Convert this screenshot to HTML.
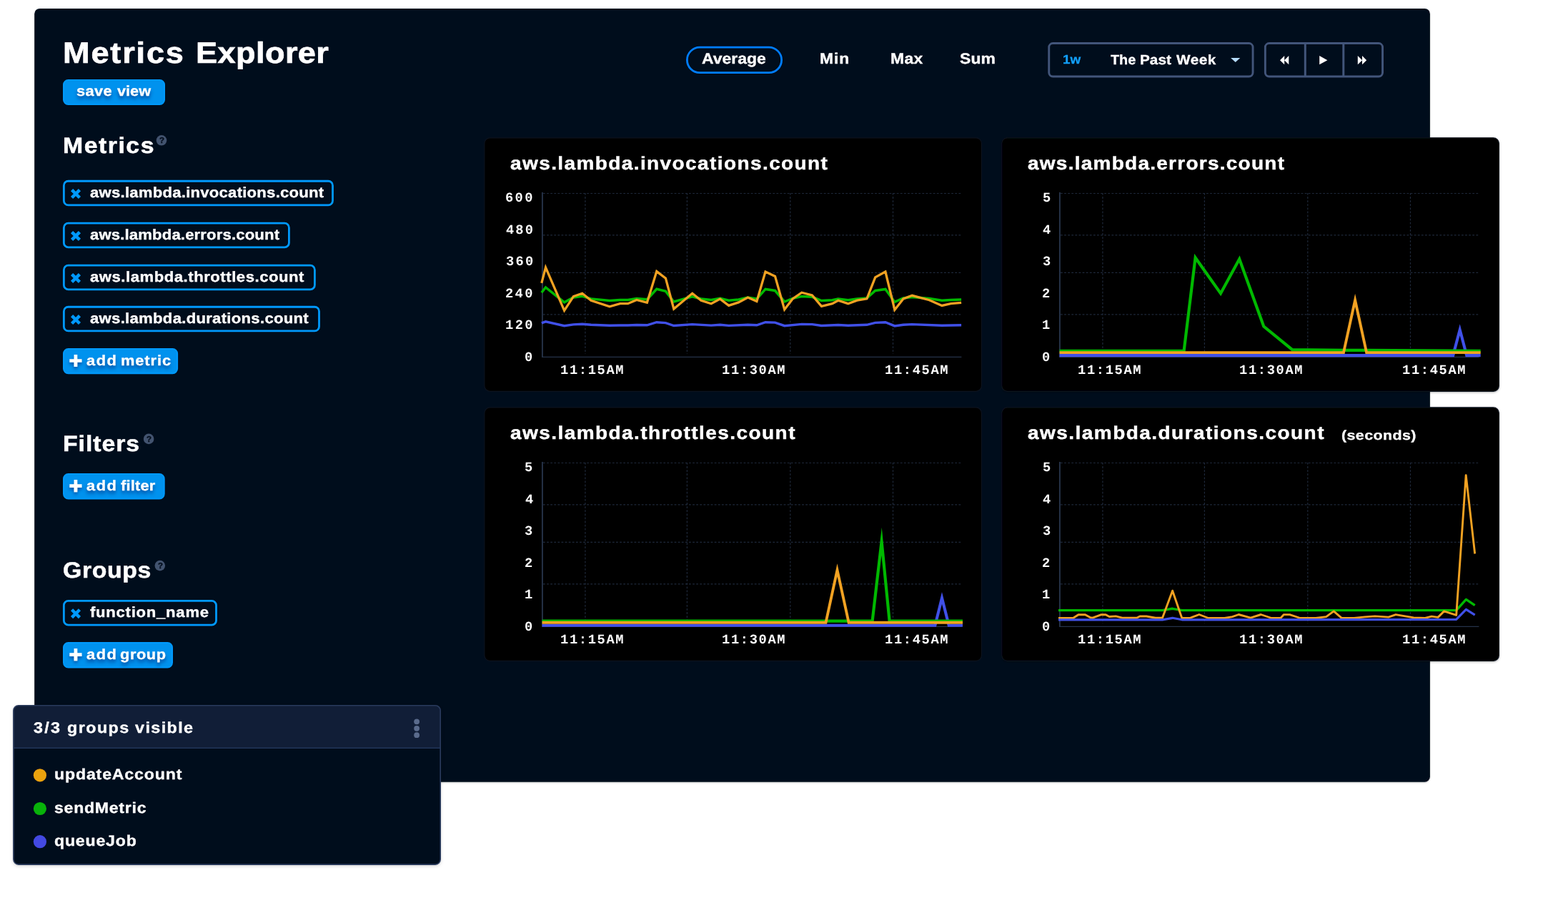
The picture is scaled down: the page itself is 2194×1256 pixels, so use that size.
<!DOCTYPE html>
<html lang="en"><head><meta charset="utf-8"><title>Metrics Explorer</title>
<meta name="viewport" content="width=2194">
<style>
*{box-sizing:border-box;margin:0;padding:0}
html,body{width:2194px;height:1256px;overflow:hidden;background:#fff}
body{position:relative;font-family:'Liberation Sans', Arial, sans-serif;font-weight:bold;color:#fff;text-rendering:geometricPrecision}
.abs,.t{position:absolute}
.t{white-space:nowrap;display:block;font-weight:bold;transform-origin:0 50%;will-change:transform}
.w{position:absolute;top:0;transform-origin:0 50%;display:block;will-change:transform}
.m{font-family:'Liberation Mono', monospace}
.sh{text-shadow:0 4px 5px rgba(0,50,130,.85)}
svg{display:block;overflow:visible}
</style></head>
<body>
<svg class="abs" width="2194" height="1256" viewBox="0 0 2194 1256" style="left:0;top:0"><defs><filter id="ps" x="-1%" y="-1%" width="102%" height="103%"><feDropShadow dx="0" dy="1" stdDeviation="1.2" flood-color="#000" flood-opacity=".22"/></filter><filter id="ls" x="-3%" y="-5%" width="106%" height="112%"><feDropShadow dx="0" dy="2" stdDeviation="2.5" flood-color="#000" flood-opacity=".2"/></filter><filter id="cs" x="-2%" y="-3%" width="104%" height="107%"><feDropShadow dx="0" dy="1" stdDeviation="1.5" flood-color="#000" flood-opacity=".3"/></filter><filter id="is" x="-50%" y="-50%" width="200%" height="200%"><feDropShadow dx="0" dy="3" stdDeviation="2.2" flood-color="#003a8c" flood-opacity=".75"/></filter></defs><rect x="48.20" y="11.90" width="1952.70" height="1081.90" rx="7.50" fill="#020c1b" filter="url(#ps)"/>
<rect x="89.00" y="112.10" width="141.00" height="33.90" rx="6.50" fill="#0092ee" stroke="#0099fc" stroke-width="2"/>
<rect x="961.40" y="66.20" width="132.20" height="35.40" rx="17.70" fill="none" stroke="#007dff" stroke-width="2.8"/>
<rect x="1467.75" y="60.55" width="285.30" height="46.50" rx="5.55" fill="none" stroke="#42557a" stroke-width="2.9"/>
<path d="M1722.1 81.1H1735.3L1728.7 86.9Z" fill="#b5dcfa"/>
<rect x="1770.35" y="60.55" width="164.20" height="46.50" rx="5.55" fill="none" stroke="#42557a" stroke-width="2.9"/>
<path d="M1826.3 60V107.5M1879.8 60V107.5" stroke="#42557a" stroke-width="3" fill="none"/>
<path fill="#fff" d="M1791 84.15L1797.2 78V90.3Z M1797.1 84.15L1803.3 78V90.3Z M1846.2 78L1857.4 84.15L1846.2 90.3Z M1899.8 78L1906.1 84.15L1899.8 90.3Z M1906 78L1912.2 84.15L1906 90.3Z"/>
<circle cx="226.0" cy="196.3" r="7.3" fill="#42536f"/>
<rect x="89.35" y="253.25" width="376.15" height="33.70" rx="6.20" fill="none" stroke="#0099fc" stroke-width="2.8"/>
<path d="M100.55 265.60L111.45 276.50M111.45 265.60L100.55 276.50" stroke="#0099fc" stroke-width="4.5" stroke-linejoin="round" fill="none"/>
<rect x="89.35" y="312.20" width="315.05" height="33.70" rx="6.20" fill="none" stroke="#0099fc" stroke-width="2.8"/>
<path d="M100.55 324.55L111.45 335.45M111.45 324.55L100.55 335.45" stroke="#0099fc" stroke-width="4.5" stroke-linejoin="round" fill="none"/>
<rect x="89.35" y="371.20" width="351.05" height="33.70" rx="6.20" fill="none" stroke="#0099fc" stroke-width="2.8"/>
<path d="M100.55 383.55L111.45 394.45M111.45 383.55L100.55 394.45" stroke="#0099fc" stroke-width="4.5" stroke-linejoin="round" fill="none"/>
<rect x="89.35" y="429.25" width="357.15" height="33.70" rx="6.20" fill="none" stroke="#0099fc" stroke-width="2.8"/>
<path d="M100.55 441.60L111.45 452.50M111.45 441.60L100.55 452.50" stroke="#0099fc" stroke-width="4.5" stroke-linejoin="round" fill="none"/>
<rect x="89.00" y="487.90" width="159.10" height="34.30" rx="6.60" fill="#0092ee" stroke="#0099fc" stroke-width="2"/>
<path d="M97.30 504.50H114.50M105.90 495.90V513.10" stroke="#fff" stroke-width="4.7" fill="none" filter="url(#is)"/>
<circle cx="208.1" cy="613.9" r="7.3" fill="#42536f"/>
<rect x="89.00" y="663.10" width="140.70" height="34.30" rx="6.60" fill="#0092ee" stroke="#0099fc" stroke-width="2"/>
<path d="M97.30 679.70H114.50M105.90 671.10V688.30" stroke="#fff" stroke-width="4.7" fill="none" filter="url(#is)"/>
<circle cx="223.8" cy="791.1" r="7.3" fill="#42536f"/>
<rect x="89.35" y="840.40" width="213.15" height="33.70" rx="6.20" fill="none" stroke="#0099fc" stroke-width="2.8"/>
<path d="M100.55 852.75L111.45 863.65M111.45 852.75L100.55 863.65" stroke="#0099fc" stroke-width="4.5" stroke-linejoin="round" fill="none"/>
<rect x="89.00" y="899.10" width="152.00" height="34.30" rx="6.60" fill="#0092ee" stroke="#0099fc" stroke-width="2"/>
<path d="M97.30 915.70H114.50M105.90 907.10V924.30" stroke="#fff" stroke-width="4.7" fill="none" filter="url(#is)"/>
<rect x="677.80" y="192.80" width="695.70" height="354.50" rx="7.90" fill="#000" stroke="#0c131f" stroke-width="1.2"/>
<rect x="1401.70" y="192.80" width="695.70" height="354.50" rx="7.90" fill="#000" stroke="#0c131f" stroke-width="1.2" filter="url(#cs)"/>
<rect x="677.80" y="569.90" width="695.70" height="354.50" rx="7.90" fill="#000" stroke="#0c131f" stroke-width="1.2"/>
<rect x="1401.70" y="569.90" width="695.70" height="354.50" rx="7.90" fill="#000" stroke="#0c131f" stroke-width="1.2" filter="url(#cs)"/></svg>
<header>
<h1 class="t" style="left:0;top:51.11px;font-size:41.4px;line-height:46px;-webkit-text-stroke:0.7px #fff;"><span class="w" style="left:88.43px;letter-spacing:1.673px;transform:scaleX(1.0900);">Metrics</span> <span class="w" style="left:273.53px;letter-spacing:0.377px;transform:scaleX(1.0900);">Explorer</span></h1>
<span class="t sh" style="left:0;top:117.11px;font-size:20px;line-height:22px;-webkit-text-stroke:0.34px #fff;"><span class="w" style="left:106.71px;letter-spacing:0.308px;transform:scaleX(1.0900);">save</span> <span class="w" style="left:164.37px;letter-spacing:0.000px;transform:scaleX(1.0843);">view</span></span>
<nav>
<span class="t" style="left:981.84px;top:71.11px;letter-spacing:0.036px;font-size:21px;line-height:23px;-webkit-text-stroke:0.36px #fff;transform:scaleX(1.0900);">Average</span>
<span class="t" style="left:1146.55px;top:71.11px;letter-spacing:0.823px;font-size:21px;line-height:23px;-webkit-text-stroke:0.36px #fff;transform:scaleX(1.0900);">Min</span>
<span class="t" style="left:1245.65px;top:71.11px;letter-spacing:0.332px;font-size:21px;line-height:23px;-webkit-text-stroke:0.36px #fff;transform:scaleX(1.0900);">Max</span>
<span class="t" style="left:1343.33px;top:71.11px;letter-spacing:0.128px;font-size:21px;line-height:23px;-webkit-text-stroke:0.36px #fff;transform:scaleX(1.0900);">Sum</span>
</nav>
<span class="t" style="left:1487.17px;top:73.11px;letter-spacing:0.000px;font-size:17.6px;line-height:20px;color:#12a0fb;-webkit-text-stroke:0.3px #12a0fb;transform:scaleX(1.0717);">1w</span>
<span class="t" style="left:0;top:74.11px;font-size:19px;line-height:21px;-webkit-text-stroke:0.32px #fff;"><span class="w" style="left:1553.75px;letter-spacing:0.000px;transform:scaleX(1.0445);">The</span> <span class="w" style="left:1594.85px;letter-spacing:0.027px;transform:scaleX(1.0900);">Past</span> <span class="w" style="left:1646.46px;letter-spacing:0.464px;transform:scaleX(1.0900);">Week</span></span>
</header>
<aside>
<h2 class="t" style="left:88.15px;top:186.11px;letter-spacing:1.397px;font-size:31px;line-height:35px;-webkit-text-stroke:0.53px #fff;transform:scaleX(1.0900);">Metrics</h2>
<span class="t q" style="left:222.75px;top:191.11px;letter-spacing:0.000px;font-size:11.5px;line-height:12px;color:#020c1b;-webkit-text-stroke:0.3px #020c1b;">?</span>
<span class="t" style="left:126.23px;top:259.11px;letter-spacing:0.223px;font-size:20.3px;line-height:22px;-webkit-text-stroke:0.35px #fff;transform:scaleX(1.0900);">aws.lambda.invocations.count</span>
<span class="t" style="left:126.23px;top:318.11px;letter-spacing:0.140px;font-size:20.3px;line-height:22px;-webkit-text-stroke:0.35px #fff;transform:scaleX(1.0900);">aws.lambda.errors.count</span>
<span class="t" style="left:126.23px;top:377.11px;letter-spacing:0.485px;font-size:20.3px;line-height:22px;-webkit-text-stroke:0.35px #fff;transform:scaleX(1.0900);">aws.lambda.throttles.count</span>
<span class="t" style="left:126.23px;top:435.11px;letter-spacing:0.265px;font-size:20.3px;line-height:22px;-webkit-text-stroke:0.35px #fff;transform:scaleX(1.0900);">aws.lambda.durations.count</span>
<span class="t sh" style="left:0;top:494.11px;font-size:20px;line-height:22px;-webkit-text-stroke:0.34px #fff;"><span class="w" style="left:120.72px;letter-spacing:1.414px;transform:scaleX(1.0900);">add</span> <span class="w" style="left:168.55px;letter-spacing:0.847px;transform:scaleX(1.0900);">metric</span></span>
<h2 class="t" style="left:87.75px;top:603.11px;letter-spacing:0.879px;font-size:31px;line-height:35px;-webkit-text-stroke:0.53px #fff;transform:scaleX(1.0900);">Filters</h2>
<span class="t q" style="left:204.85px;top:609.11px;letter-spacing:0.000px;font-size:11.5px;line-height:12px;color:#020c1b;-webkit-text-stroke:0.3px #020c1b;">?</span>
<span class="t sh" style="left:0;top:669.11px;font-size:20px;line-height:22px;-webkit-text-stroke:0.34px #fff;"><span class="w" style="left:120.72px;letter-spacing:1.414px;transform:scaleX(1.0900);">add</span> <span class="w" style="left:169.04px;letter-spacing:0.194px;transform:scaleX(1.0900);">filter</span></span>
<h2 class="t" style="left:88.11px;top:780.11px;letter-spacing:0.596px;font-size:31px;line-height:35px;-webkit-text-stroke:0.53px #fff;transform:scaleX(1.0900);">Groups</h2>
<span class="t q" style="left:220.55px;top:786.11px;letter-spacing:0.000px;font-size:11.5px;line-height:12px;color:#020c1b;-webkit-text-stroke:0.3px #020c1b;">?</span>
<span class="t" style="left:126.45px;top:846.11px;letter-spacing:0.678px;font-size:20.3px;line-height:22px;-webkit-text-stroke:0.35px #fff;transform:scaleX(1.0900);">function_name</span>
<span class="t sh" style="left:0;top:905.11px;font-size:20px;line-height:22px;-webkit-text-stroke:0.34px #fff;"><span class="w" style="left:120.72px;letter-spacing:1.414px;transform:scaleX(1.0900);">add</span> <span class="w" style="left:168.20px;letter-spacing:0.521px;transform:scaleX(1.0900);">group</span></span>
</aside>
<main>
<h3 class="t" style="left:713.68px;top:215.11px;letter-spacing:1.287px;font-size:25.7px;line-height:28px;-webkit-text-stroke:0.44px #fff;transform:scaleX(1.0900);">aws.lambda.invocations.count</h3>
<svg class="abs" style="left:677.0px;top:192.0px" width="700" height="356" viewBox="677.0 192.0 700 356"><path d="M760.0 270.5H1345.2 M760.0 328.8H1345.2 M760.0 381.4H1345.2 M760.0 439.8H1345.2 M818.9 270.0V495.0 M961.4 270.0V495.0 M1105.8 270.0V495.0 M1249.5 270.0V495.0" stroke="#1e283a" stroke-width="1.2" stroke-dasharray="2.8 2.3" fill="none"/><path d="M758.9 269.0V499.9" stroke="#263349" stroke-width="1.9" fill="none"/><path d="M758.0 499.4H1345.4" stroke="#263349" stroke-width="1.1" fill="none"/><polyline points="757.8,451.8 763.5,449.8 789.6,455.7 802.4,453.9 814.7,453.2 827.0,454.3 853.0,455.2 867.6,455.0 878.5,455.0 890.8,454.5 905.4,454.8 918.8,450.7 931.4,451.6 942.8,455.5 968.7,453.6 995.1,455.1 1007.6,454.3 1019.7,455.4 1046.4,454.2 1058.9,454.8 1071.0,450.7 1084.5,451.1 1097.7,455.7 1121.8,453.4 1136.4,453.6 1149.5,455.5 1172.8,454.5 1186.7,455.2 1212.9,454.3 1224.7,451.4 1238.9,450.7 1251.9,455.9 1263.9,454.3 1276.3,453.6 1318.0,455.2 1345.1,454.8" fill="none" stroke="#4050e8" stroke-width="3.4" stroke-linejoin="miter" stroke-miterlimit="10"/><polyline points="757.8,409.3 763.5,401.9 789.6,422.9 802.4,416.0 814.7,414.2 827.0,417.9 853.0,420.6 867.6,419.5 878.5,419.5 890.8,417.4 905.4,418.8 918.8,404.2 931.4,407.4 942.8,422.0 968.7,414.7 981.0,417.9 995.1,419.4 1007.6,417.2 1019.7,420.3 1033.4,419.0 1046.4,416.0 1058.9,418.1 1071.0,404.4 1084.5,406.5 1097.7,422.0 1109.1,417.4 1121.8,414.5 1136.4,415.3 1149.5,420.6 1164.6,419.7 1172.8,417.9 1186.7,419.7 1199.2,417.9 1212.9,417.1 1224.7,406.5 1238.9,404.4 1251.9,422.4 1263.9,417.0 1276.3,415.4 1300.4,417.4 1318.0,420.2 1330.5,419.4 1345.1,419.0" fill="none" stroke="#00b900" stroke-width="3.5" stroke-linejoin="miter" stroke-miterlimit="10"/><polyline points="757.8,395.9 763.5,374.1 789.6,434.3 802.4,414.7 814.7,410.3 827.0,420.2 853.0,428.8 867.6,424.7 878.5,424.7 890.8,419.4 905.4,423.3 918.8,379.6 931.4,389.2 942.8,432.0 968.7,410.3 981.0,420.2 995.1,424.7 1007.6,418.1 1019.7,427.4 1033.4,422.9 1046.4,416.0 1058.9,421.5 1071.0,380.0 1084.5,386.4 1097.7,432.9 1109.1,417.9 1121.8,409.2 1136.4,412.9 1149.5,428.3 1164.6,424.7 1172.8,420.2 1186.7,424.7 1199.2,420.2 1212.9,417.9 1224.7,387.8 1238.9,380.0 1251.9,433.4 1263.9,417.9 1276.3,413.3 1300.4,419.7 1318.0,427.4 1330.5,424.7 1345.1,423.3" fill="none" stroke="#f2a222" stroke-width="3.3" stroke-linejoin="miter" stroke-miterlimit="10"/></svg>
<span class="t m" style="left:707.30px;top:266.11px;letter-spacing:2.378px;font-size:18.7px;line-height:22px;">600</span>
<span class="t m" style="left:707.80px;top:311.11px;letter-spacing:2.128px;font-size:18.7px;line-height:22px;">480</span>
<span class="t m" style="left:707.60px;top:355.11px;letter-spacing:2.228px;font-size:18.7px;line-height:22px;">360</span>
<span class="t m" style="left:707.30px;top:400.11px;letter-spacing:2.378px;font-size:18.7px;line-height:22px;">240</span>
<span class="t m" style="left:707.20px;top:444.11px;letter-spacing:2.428px;font-size:18.7px;line-height:22px;">120</span>
<span class="t m" style="left:734.10px;top:489.11px;letter-spacing:0.000px;font-size:18.7px;line-height:22px;">0</span>
<span class="t m" style="left:783.90px;top:507.11px;letter-spacing:1.678px;font-size:18.7px;line-height:22px;">11:15AM</span>
<span class="t m" style="left:1009.80px;top:507.11px;letter-spacing:1.678px;font-size:18.7px;line-height:22px;">11:30AM</span>
<span class="t m" style="left:1237.50px;top:507.11px;letter-spacing:1.678px;font-size:18.7px;line-height:22px;">11:45AM</span>
<h3 class="t" style="left:1437.98px;top:215.11px;letter-spacing:1.149px;font-size:25.7px;line-height:28px;-webkit-text-stroke:0.44px #fff;transform:scaleX(1.0900);">aws.lambda.errors.count</h3>
<svg class="abs" style="left:1401.3px;top:192.0px" width="700" height="356" viewBox="1401.3 192.0 700 356"><path d="M1484.3 270.5H2069.5 M1484.3 328.8H2069.5 M1484.3 381.4H2069.5 M1484.3 439.8H2069.5 M1543.2 270.0V495.0 M1685.7 270.0V495.0 M1830.1 270.0V495.0 M1973.8 270.0V495.0" stroke="#1e283a" stroke-width="1.2" stroke-dasharray="2.8 2.3" fill="none"/><path d="M1483.2 269.0V499.9" stroke="#263349" stroke-width="1.9" fill="none"/><path d="M1482.3 499.4H2069.7" stroke="#263349" stroke-width="1.1" fill="none"/><polyline points="1482.9,497.1 2033.5,497.1 2043.0,461.2 2052.5,497.1 2072.0,497.1" fill="none" stroke="#4050e8" stroke-width="4.1" stroke-linejoin="miter" stroke-miterlimit="10"/><polyline points="1482.9,490.8 1656.9,490.8 1672.9,360.5 1708.3,410.4 1734.5,362.3 1768.6,456.6 1808.5,489.2 1880.0,489.8 2072.0,490.8" fill="none" stroke="#00b900" stroke-width="4.2" stroke-linejoin="miter" stroke-miterlimit="10"/><polyline points="1482.9,493.1 1880.3,493.1 1896.4,419.8 1912.4,493.1 2072.0,493.1" fill="none" stroke="#f2a222" stroke-width="3.9" stroke-linejoin="miter" stroke-miterlimit="10"/></svg>
<span class="t m" style="left:1458.50px;top:266.11px;letter-spacing:0.000px;font-size:18.7px;line-height:22px;">5</span>
<span class="t m" style="left:1458.80px;top:311.11px;letter-spacing:0.000px;font-size:18.7px;line-height:22px;">4</span>
<span class="t m" style="left:1458.60px;top:355.11px;letter-spacing:0.000px;font-size:18.7px;line-height:22px;">3</span>
<span class="t m" style="left:1458.30px;top:400.11px;letter-spacing:0.000px;font-size:18.7px;line-height:22px;">2</span>
<span class="t m" style="left:1458.20px;top:444.11px;letter-spacing:0.000px;font-size:18.7px;line-height:22px;">1</span>
<span class="t m" style="left:1458.40px;top:489.11px;letter-spacing:0.000px;font-size:18.7px;line-height:22px;">0</span>
<span class="t m" style="left:1508.20px;top:507.11px;letter-spacing:1.678px;font-size:18.7px;line-height:22px;">11:15AM</span>
<span class="t m" style="left:1734.10px;top:507.11px;letter-spacing:1.678px;font-size:18.7px;line-height:22px;">11:30AM</span>
<span class="t m" style="left:1961.80px;top:507.11px;letter-spacing:1.678px;font-size:18.7px;line-height:22px;">11:45AM</span>
<h3 class="t" style="left:713.68px;top:592.11px;letter-spacing:1.320px;font-size:25.7px;line-height:28px;-webkit-text-stroke:0.44px #fff;transform:scaleX(1.0900);">aws.lambda.throttles.count</h3>
<svg class="abs" style="left:677.0px;top:569.2px" width="700" height="356" viewBox="677.0 569.2 700 356"><path d="M760.0 647.7H1345.2 M760.0 706.0H1345.2 M760.0 758.6H1345.2 M760.0 817.0H1345.2 M818.9 647.2V872.2 M961.4 647.2V872.2 M1105.8 647.2V872.2 M1249.5 647.2V872.2" stroke="#1e283a" stroke-width="1.2" stroke-dasharray="2.8 2.3" fill="none"/><path d="M758.9 646.2V877.1" stroke="#263349" stroke-width="1.9" fill="none"/><path d="M758.0 876.6H1345.4" stroke="#263349" stroke-width="1.1" fill="none"/><polyline points="758.6,875.0 1308.4,875.0 1318.0,836.7 1327.7,875.0 1347.0,875.0" fill="none" stroke="#4050e8" stroke-width="4.1" stroke-linejoin="miter" stroke-miterlimit="10"/><polyline points="758.6,868.9 1220.6,868.9 1233.6,757.5 1244.6,868.9 1347.0,868.9" fill="none" stroke="#00b900" stroke-width="4.2" stroke-linejoin="miter" stroke-miterlimit="10"/><polyline points="758.6,871.0 1155.5,871.0 1171.5,797.5 1187.6,871.0 1347.0,871.0" fill="none" stroke="#f2a222" stroke-width="3.9" stroke-linejoin="miter" stroke-miterlimit="10"/></svg>
<span class="t m" style="left:734.20px;top:643.11px;letter-spacing:0.000px;font-size:18.7px;line-height:22px;">5</span>
<span class="t m" style="left:734.50px;top:688.11px;letter-spacing:0.000px;font-size:18.7px;line-height:22px;">4</span>
<span class="t m" style="left:734.30px;top:732.11px;letter-spacing:0.000px;font-size:18.7px;line-height:22px;">3</span>
<span class="t m" style="left:734.00px;top:777.11px;letter-spacing:0.000px;font-size:18.7px;line-height:22px;">2</span>
<span class="t m" style="left:733.90px;top:821.11px;letter-spacing:0.000px;font-size:18.7px;line-height:22px;">1</span>
<span class="t m" style="left:734.10px;top:866.11px;letter-spacing:0.000px;font-size:18.7px;line-height:22px;">0</span>
<span class="t m" style="left:783.90px;top:884.11px;letter-spacing:1.678px;font-size:18.7px;line-height:22px;">11:15AM</span>
<span class="t m" style="left:1009.80px;top:884.11px;letter-spacing:1.678px;font-size:18.7px;line-height:22px;">11:30AM</span>
<span class="t m" style="left:1237.50px;top:884.11px;letter-spacing:1.678px;font-size:18.7px;line-height:22px;">11:45AM</span>
<h3 class="t" style="left:1437.98px;top:592.11px;letter-spacing:1.336px;font-size:25.7px;line-height:28px;-webkit-text-stroke:0.44px #fff;transform:scaleX(1.0900);">aws.lambda.durations.count</h3>
<span class="t" style="left:1877.41px;top:598.11px;letter-spacing:0.320px;font-size:18.5px;line-height:21px;-webkit-text-stroke:0.31px #fff;transform:scaleX(1.1600);">(seconds)</span>
<svg class="abs" style="left:1401.3px;top:569.2px" width="700" height="356" viewBox="1401.3 569.2 700 356"><path d="M1484.3 647.7H2069.5 M1484.3 706.0H2069.5 M1484.3 758.6H2069.5 M1484.3 817.0H2069.5 M1543.2 647.2V872.2 M1685.7 647.2V872.2 M1830.1 647.2V872.2 M1973.8 647.2V872.2" stroke="#1e283a" stroke-width="1.2" stroke-dasharray="2.8 2.3" fill="none"/><path d="M1483.2 646.2V877.1" stroke="#263349" stroke-width="1.9" fill="none"/><path d="M1482.3 876.6H2069.7" stroke="#263349" stroke-width="1.1" fill="none"/><polyline points="1481.3,853.8 1626.8,853.8 1640.9,851.5 1654.1,853.8 2038.0,853.8 2051.7,838.6 2064.0,846.9" fill="none" stroke="#00b900" stroke-width="3.4" stroke-linejoin="round" stroke-miterlimit="10"/><polyline points="1481.3,864.7 1501.9,864.7 1509.2,860.0 1518.8,860.0 1526.0,864.0 1529.2,864.4 1540.6,860.0 1547.5,860.0 1552.5,862.7 1561.6,862.1 1571.6,864.5 1590.8,864.5 1595.3,862.2 1604.4,862.2 1617.2,864.5 1626.8,864.5 1640.9,826.4 1654.1,864.7 1665.1,864.7 1670.0,862.8 1678.2,859.7 1691.0,864.7 1713.8,864.7 1724.7,862.8 1733.5,859.7 1750.2,864.4 1764.6,859.7 1779.4,864.7 1792.2,864.7 1796.7,859.8 1804.9,859.8 1819.5,864.7 1841.4,864.7 1856.0,862.8 1866.5,855.1 1877.5,864.6 1895.1,864.6 1910.1,863.1 1924.2,862.1 1943.2,863.3 1953.3,859.8 1978.3,864.1 1994.4,864.6 2003.4,862.3 2012.4,863.6 2020.9,855.1 2038.0,860.6 2051.5,664.8 2064.0,774.7" fill="none" stroke="#f2a222" stroke-width="2.9" stroke-linejoin="round" stroke-miterlimit="10"/><polyline points="1481.3,867.0 1626.8,867.0 1640.9,864.5 1654.1,867.0 2038.0,866.6 2051.7,852.6 2064.0,860.4" fill="none" stroke="#4050e8" stroke-width="3.2" stroke-linejoin="round" stroke-miterlimit="10"/></svg>
<span class="t m" style="left:1458.50px;top:643.11px;letter-spacing:0.000px;font-size:18.7px;line-height:22px;">5</span>
<span class="t m" style="left:1458.80px;top:688.11px;letter-spacing:0.000px;font-size:18.7px;line-height:22px;">4</span>
<span class="t m" style="left:1458.60px;top:732.11px;letter-spacing:0.000px;font-size:18.7px;line-height:22px;">3</span>
<span class="t m" style="left:1458.30px;top:777.11px;letter-spacing:0.000px;font-size:18.7px;line-height:22px;">2</span>
<span class="t m" style="left:1458.20px;top:821.11px;letter-spacing:0.000px;font-size:18.7px;line-height:22px;">1</span>
<span class="t m" style="left:1458.40px;top:866.11px;letter-spacing:0.000px;font-size:18.7px;line-height:22px;">0</span>
<span class="t m" style="left:1508.20px;top:884.11px;letter-spacing:1.678px;font-size:18.7px;line-height:22px;">11:15AM</span>
<span class="t m" style="left:1734.10px;top:884.11px;letter-spacing:1.678px;font-size:18.7px;line-height:22px;">11:30AM</span>
<span class="t m" style="left:1961.80px;top:884.11px;letter-spacing:1.678px;font-size:18.7px;line-height:22px;">11:45AM</span>
</main>
<section>
<svg class="abs" width="2194" height="1256" viewBox="0 0 2194 1256" style="left:0;top:0"><rect x="18.9" y="986.8" width="597.3" height="222.3" rx="7" fill="#020c1b" filter="url(#ls)"/><path d="M18.9 1046.6V993.8a7 7 0 0 1 7 -7H609.2a7 7 0 0 1 7 7V1046.6Z" fill="#111e37"/><path d="M18.9 1046.3H616.2" stroke="#22355a" stroke-width="1.4" fill="none"/><rect x="18.9" y="986.8" width="597.3" height="222.3" rx="7" fill="none" stroke="#2a3b5d" stroke-width="1.6"/><circle cx="583.1" cy="1009.3" r="3.9" fill="#5a6b8c"/><circle cx="583.1" cy="1018.8" r="3.9" fill="#5a6b8c"/><circle cx="583.1" cy="1028.2" r="3.9" fill="#5a6b8c"/><circle cx="55.9" cy="1084.3" r="9.1" fill="#eba20e"/><circle cx="55.9" cy="1131" r="9.1" fill="#08b20a"/><circle cx="55.9" cy="1177.2" r="9.1" fill="#4349e2"/></svg>
<h4 class="t" style="left:0;top:1006.11px;font-size:21.4px;line-height:24px;-webkit-text-stroke:0.36px #fff;"><span class="w" style="left:47.34px;letter-spacing:2.117px;transform:scaleX(1.0900);">3/3</span> <span class="w" style="left:93.51px;letter-spacing:1.329px;transform:scaleX(1.0900);">groups</span> <span class="w" style="left:188.58px;letter-spacing:1.299px;transform:scaleX(1.0900);">visible</span></h4>
<span class="t" style="left:75.76px;top:1072.11px;letter-spacing:0.784px;font-size:21.2px;line-height:23px;-webkit-text-stroke:0.36px #fff;transform:scaleX(1.0900);">updateAccount</span>
<span class="t" style="left:76.42px;top:1119.11px;letter-spacing:0.668px;font-size:21.2px;line-height:23px;-webkit-text-stroke:0.36px #fff;transform:scaleX(1.0900);">sendMetric</span>
<span class="t" style="left:76.31px;top:1165.11px;letter-spacing:0.748px;font-size:21.2px;line-height:23px;-webkit-text-stroke:0.36px #fff;transform:scaleX(1.0900);">queueJob</span>
</section>
</body></html>
